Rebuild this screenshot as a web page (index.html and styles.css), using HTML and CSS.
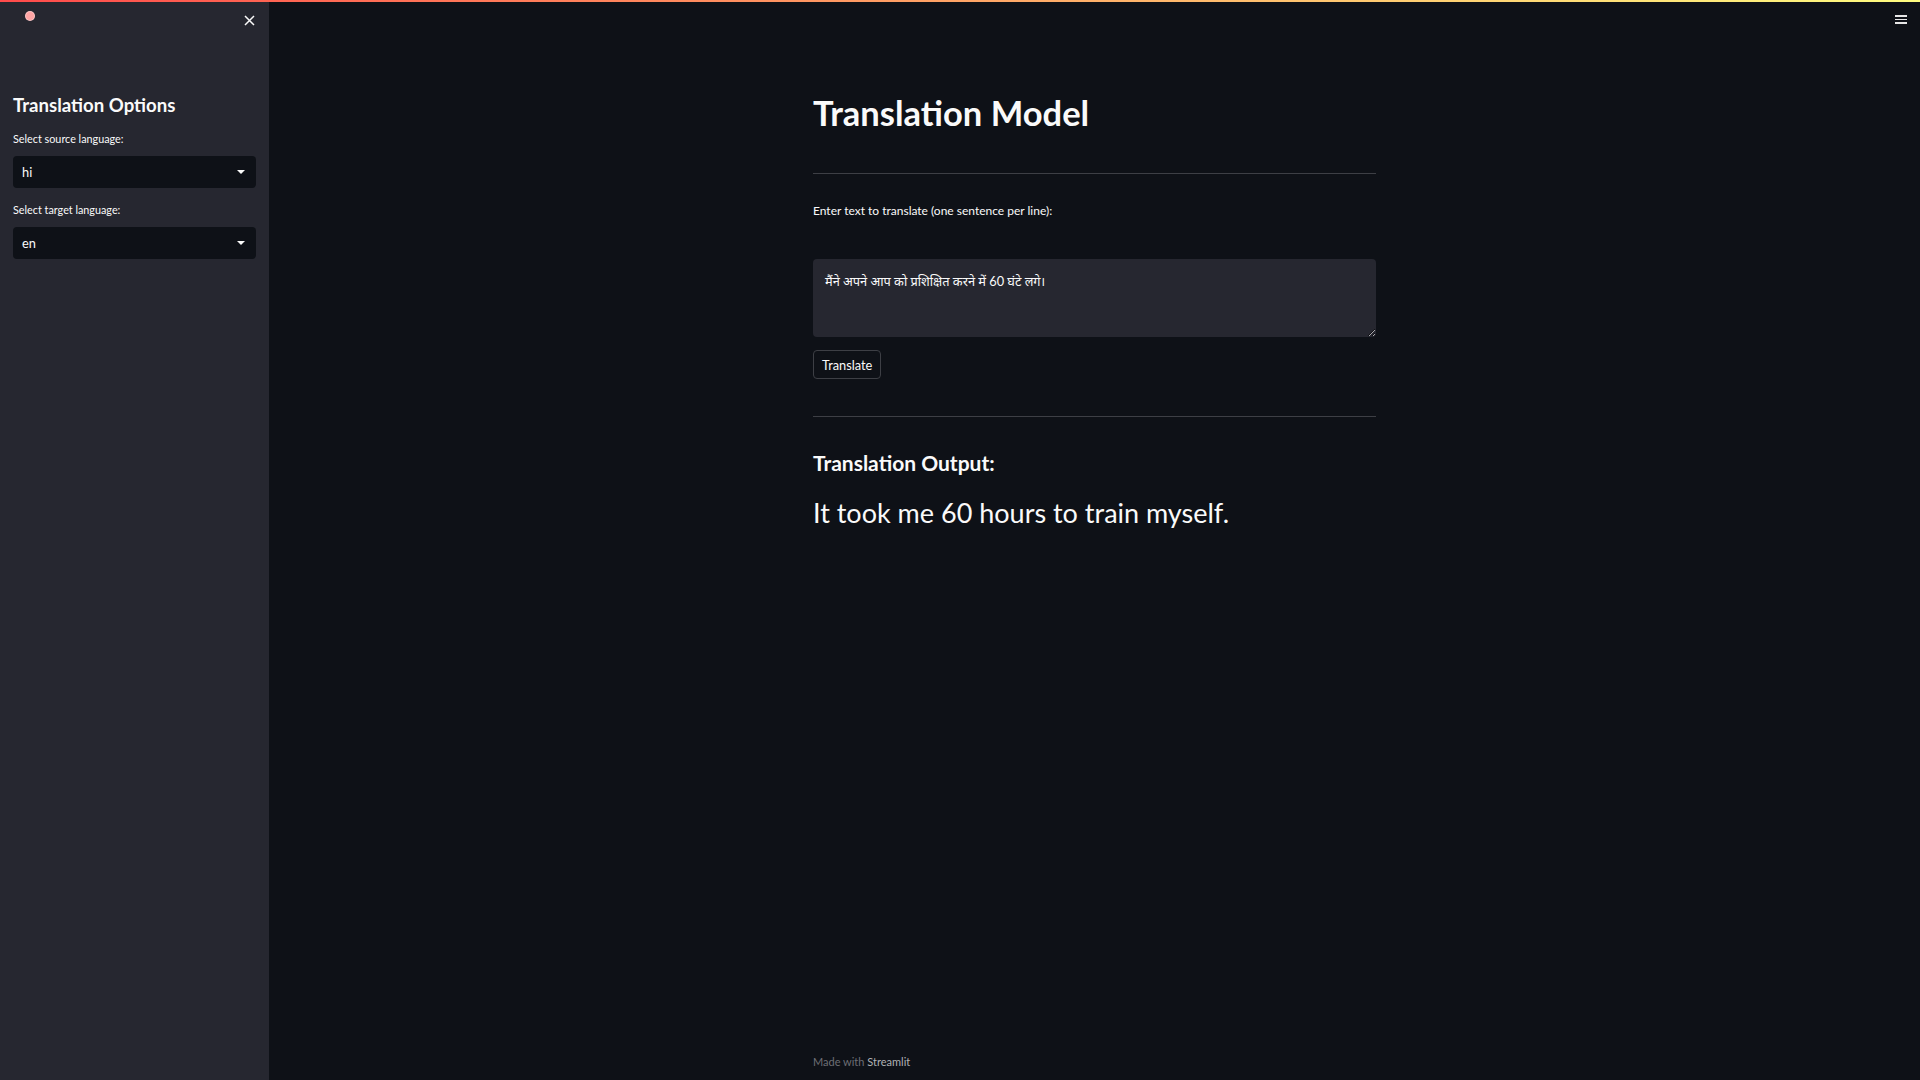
FILE: index.html
```html
<!DOCTYPE html>
<html lang="en">
<head>
<meta charset="utf-8">
<title>Translation Model</title>
<link rel="stylesheet" href="styles.css">
</head>
<body>
<div class="decoration"></div>
<div class="app">
  <aside class="sidebar">
    <div class="sidebar-top">
      <span class="dot"></span>
      <button class="close" aria-label="Close sidebar">
        <svg width="11" height="11" viewBox="0 0 11 11"><path d="M1 1L10 10M10 1L1 10" stroke="#fafafa" stroke-width="1.5" fill="none"/></svg>
      </button>
    </div>
    <h2 class="side-title">Translation Options</h2>
    <div class="field">
      <label class="label">Select source language:</label>
      <div class="select"><span>hi</span><span class="caret"></span></div>
    </div>
    <div class="field">
      <label class="label">Select target language:</label>
      <div class="select"><span>en</span><span class="caret"></span></div>
    </div>
  </aside>
  <main class="main">
    <button class="menu" aria-label="Menu">
      <span></span><span></span><span></span>
    </button>
    <div class="block">
      <h1 class="title">Translation Model</h1>
      <hr class="rule rule-1">
      <label class="label main-label">Enter text to translate (one sentence per line):</label>
      <textarea class="textarea">मैंने अपने आप को प्रशिक्षित करने में 60 घंटे लगे।</textarea>
      <button class="btn">Translate</button>
      <hr class="rule rule-2">
      <h3 class="subheader">Translation Output:</h3>
      <p class="output">It took me 60 hours to train myself.</p>
    </div>
    <footer class="footer">Made with <span class="brand">Streamlit</span></footer>
  </main>
</div>
</body>
</html>
```

FILE: styles.css
```css
* { box-sizing: border-box; }
html, body {
  margin: 0;
  padding: 0;
  height: 100%;
  background: #0e1117;
  color: #fafafa;
  font-family: "Lato", "Noto Sans Devanagari", "Noto Sans", sans-serif;
}
.decoration {
  position: fixed;
  top: 0;
  left: 0;
  right: 0;
  height: 2px;
  background: linear-gradient(90deg, #ff4b4b, #fffd80);
  z-index: 10;
}
.app {
  display: flex;
  height: 1080px;
}
.sidebar {
  width: 269px;
  flex: none;
  background: #262730;
  padding: 0 13px;
}
.sidebar-top {
  display: flex;
  justify-content: space-between;
  align-items: flex-start;
  height: 93px;
}
.dot {
  margin-top: 12px;
  margin-left: 13px;
  width: 8px;
  height: 8px;
  border-radius: 50%;
  background: #ffa5a5;
  box-shadow: 0 0 0 1px #ffc8c8;
}
.close {
  margin-top: 15px;
  margin-right: 1px;
  padding: 0;
  border: 0;
  background: none;
  width: 11px;
  height: 11px;
  display: flex;
}
.side-title {
  margin: 0 0 14px;
  font-size: 18.6px;
  line-height: 24px;
  font-weight: 700;
}
.field {
  display: flex;
  flex-direction: column;
  margin-bottom: 14px;
}
.label {
  font-size: 10.8px;
  line-height: 16px;
  color: #fafafa;
  display: block;
}
.field .label {
  margin-bottom: 9px;
}
.select {
  height: 32px;
  background: #0e1117;
  border-radius: 4px;
  display: flex;
  align-items: center;
  justify-content: space-between;
  padding: 0 11px 0 9px;
  font-size: 12.8px;
}
.caret {
  width: 0;
  height: 0;
  border-left: 4px solid transparent;
  border-right: 4px solid transparent;
  border-top: 4px solid #fafafa;
}
.main {
  flex: 1;
  position: relative;
  display: flex;
  justify-content: center;
}
.menu {
  position: absolute;
  top: 15px;
  right: 13px;
  width: 12px;
  padding: 0;
  border: 0;
  background: none;
  display: flex;
  flex-direction: column;
  gap: 2px;
}
.menu span {
  display: block;
  height: 1.5px;
  background: #e6e6e6;
}
.block {
  width: 563px;
  padding-top: 92px;
  display: flex;
  flex-direction: column;
  align-items: flex-start;
}
.title {
  margin: 0;
  font-size: 34.5px;
  line-height: 42px;
  font-weight: 700;
}
.rule {
  width: 100%;
  border: 0;
  height: 1px;
  background: #3d3f45;
  margin: 0;
}
.rule-1 { margin-top: 39px; }
.main-label {
  margin-top: 29px;
  font-size: 12px;
}
.textarea {
  margin-top: 40px;
  width: 100%;
  height: 78px;
  background: #262730;
  border: 0;
  border-radius: 4px;
  color: #fafafa;
  font-family: inherit;
  font-size: 12.8px;
  line-height: 1.6;
  padding: 12px 12px;
  resize: vertical;
  outline: none;
}
.btn {
  margin-top: 13px;
  height: 29px;
  padding: 0 8px;
  background: #0e1117;
  color: #fafafa;
  border: 1px solid #3d3f45;
  border-radius: 4px;
  font-family: inherit;
  font-size: 12.8px;
}
.rule-2 { margin-top: 37px; }
.subheader {
  margin: 33px 0 0;
  font-size: 21px;
  line-height: 26px;
  font-weight: 700;
}
.output {
  margin: 20px 0 0;
  font-size: 27px;
  line-height: 34px;
}
.footer {
  position: absolute;
  left: 50%;
  margin-left: -281.5px;
  bottom: 10px;
  font-size: 11px;
  line-height: 16px;
  color: #6d6f75;
}
.brand { color: #b0b1b5; }
```
